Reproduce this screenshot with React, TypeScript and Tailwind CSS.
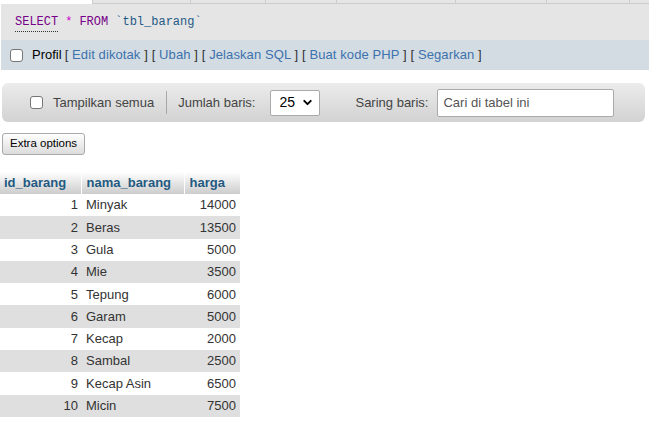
import { ChevronDown } from 'lucide-react'

const ROWS = [
  { id: 1, nama: 'Minyak', harga: 14000 },
  { id: 2, nama: 'Beras', harga: 13500 },
  { id: 3, nama: 'Gula', harga: 5000 },
  { id: 4, nama: 'Mie', harga: 3500 },
  { id: 5, nama: 'Tepung', harga: 6000 },
  { id: 6, nama: 'Garam', harga: 5000 },
  { id: 7, nama: 'Kecap', harga: 2000 },
  { id: 8, nama: 'Sambal', harga: 2500 },
  { id: 9, nama: 'Kecap Asin', harga: 6500 },
  { id: 10, nama: 'Micin', harga: 7500 },
]

const LINKS = ['Edit dikotak', 'Ubah', 'Jelaskan SQL', 'Buat kode PHP', 'Segarkan']

// widths of the half-hidden tab buttons on the very top edge
const TABS = [99, 76, 73, 120, 93, 84, 20]

function Box() {
  return <span className="block w-[13px] h-[13px] rounded-[3px] border border-[#767676] bg-white shrink-0" />
}

export default function App() {
  return (
    <div className="w-[649px] h-[422px] bg-white overflow-hidden font-['Liberation_Sans',Arial,sans-serif] text-[13px]">
      <div className="flex h-[4px] pl-[92px]">
        {TABS.map((w, i) => (
          <div key={i} style={{ width: w }} className="h-full bg-[#e5e5e5] border-l border-b border-[#cccccc]" />
        ))}
      </div>

      <div className="ml-[1px] h-[36px] bg-[#e5e5e5] flex items-center pl-[14px] font-['Liberation_Mono',monospace] text-[12px]">
        <span className="text-[#770088] border-b border-dotted border-[#333]">SELECT</span>
        <span className="text-[#cc00cc] ml-[7px]">*</span>
        <span className="text-[#770088] ml-[7px]">FROM</span>
        <span className="text-[#1f5a86] ml-[7px]">`tbl_barang`</span>
      </div>

      <div className="ml-[1px] h-[30px] bg-[#d3dce3] flex items-center pl-[9px]">
        <Box />
        <span className="ml-[9px] text-black">Profil</span>
        <span className="ml-[3px] tracking-[0.1px]">
          {LINKS.map((l, i) => (
            <span key={l}>
              <span className="text-[#333]">[ </span>
              <span className="text-[#3d72ad]">{l}</span>
              <span className="text-[#333]"> ]</span>
              {i < LINKS.length - 1 ? ' ' : ''}
            </span>
          ))}
        </span>
      </div>

      <div className="mt-[13px] ml-[2px] mr-[4px] h-[39px] rounded-[6px] bg-gradient-to-b from-[#ececec] to-[#d2d2d2] flex items-center text-[#444]">
        <span className="ml-[28px]"><Box /></span>
        <span className="ml-[10px]">Tampilkan semua</span>
        <span className="ml-[12px] w-px h-[23px] bg-[#a8a8a8]" />
        <span className="ml-[11px]">Jumlah baris:</span>
        <div className="ml-[15px] w-[50px] h-[26px] bg-white border border-[#aaa] rounded-[2px] flex items-center justify-between pl-[8px] pr-[5px] text-black text-[14px]">
          25
          <ChevronDown size={13} strokeWidth={3.5} />
        </div>
        <span className="ml-[35px]">Saring baris:</span>
        <div className="ml-[9px] w-[177px] h-[28px] bg-white border border-[#aaa] rounded-[2px] flex items-center pl-[5px] text-[#555]">
          Cari di tabel ini
        </div>
      </div>

      <div className="mt-[11px] ml-[2px]">
        <button className="h-[22px] px-[7px] rounded-[3px] border border-[#aaa] bg-gradient-to-b from-white to-[#dcdcdc] text-[11.5px] text-black">
          Extra options
        </button>
      </div>

      <table className="mt-[17px] border-collapse">
        <thead>
          <tr className="h-[22px] font-bold text-[#235a81]">
            <th className="w-[81px] text-left pl-[4px] bg-gradient-to-b from-white to-[#cccccc] border-r border-white">id_barang</th>
            <th className="w-[103px] text-left pl-[5px] bg-gradient-to-b from-white to-[#cccccc] border-r border-white">nama_barang</th>
            <th className="w-[56px] text-left pl-[5px] bg-gradient-to-b from-white to-[#cccccc]">harga</th>
          </tr>
        </thead>
        <tbody className="text-[#333]">
          {ROWS.map((r, i) => (
            <tr key={r.id} className={i % 2 ? 'h-[22.3px] bg-[#dfdfdf]' : 'h-[22.3px] bg-white'}>
              <td className="text-right pr-[3px]">{r.id}</td>
              <td className="pl-[5px]">{r.nama}</td>
              <td className="text-right pr-[4px]">{r.harga}</td>
            </tr>
          ))}
        </tbody>
      </table>
    </div>
  )
}
